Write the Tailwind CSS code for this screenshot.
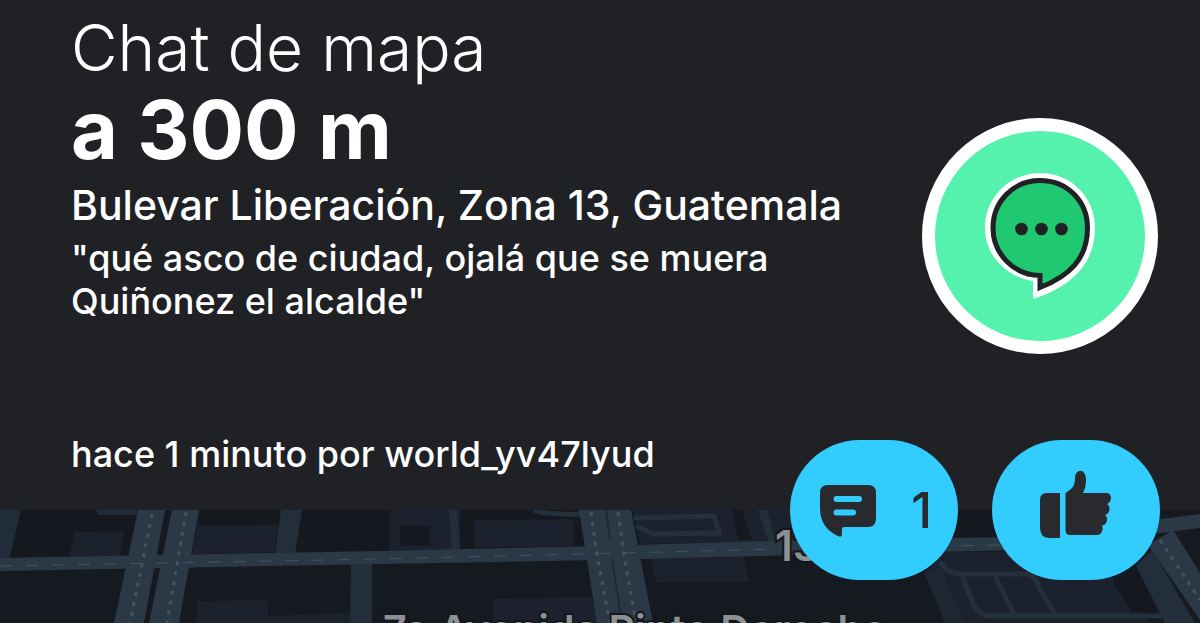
<!DOCTYPE html>
<html lang="es">
<head>
<meta charset="utf-8">
<meta name="viewport" content="width=device-width, initial-scale=1">
<title>Chat de mapa</title>
<script src="https://cdn.jsdelivr.net/npm/@tailwindcss/browser@4"></script>
</head>
<body class="bg-[#202125]">
<main class="flex min-h-screen flex-col bg-[#202125] font-['Inter','Liberation_Sans',sans-serif] text-white">
  <article class="relative z-10 flex items-start justify-between bg-[#202125] pt-2 pr-[42px] pb-[34px] pl-[71px]">
    <div class="min-w-0 flex-1">
      <h1 class="text-[64px] leading-[80px] font-light">Chat de mapa</h1>
      <p class="text-[81px] leading-[84px] font-bold">a 300 m</p>
      <p class="pt-[7px] text-[41px] leading-[52px] font-medium">Bulevar Liberación, Zona 13, Guatemala</p>
      <blockquote class="max-w-[760px] pt-[6px] text-[36px] leading-[43px] font-medium">"qué asco de ciudad, ojalá que se muera Quiñonez el alcalde"</blockquote>
      <p class="pt-[109px] text-[36px] leading-[44px] font-medium">hace 1 minuto por world_yv47lyud</p>
    </div>
    <div class="mt-[110px] size-[236px] shrink-0 rounded-full border-[13px] border-white bg-[#55f2ae]">
      <svg class="size-full" viewBox="935 131 210 210" role="img" aria-label="Chat">
        <path d="M1033 299V281C1006 277 985 255 985 228C985 197 1010 173 1040 173C1071 173 1095 197 1095 228C1095 264 1071 287 1033 299Z" fill="#fff"/>
        <path d="M1040 287.500V275.500C1013 275 993 253 993 228C993 201 1014 180.500 1040 180.500C1067 180.500 1087.500 201 1087.500 228C1087.500 259 1069 276 1040 287.500Z" fill="#1fc871" stroke="#202125" stroke-width="5"/>
        <g fill="#202125"><circle cx="1021.500" cy="229" r="6.300"/><circle cx="1041.500" cy="229" r="6.300"/><circle cx="1061.500" cy="229" r="6.300"/></g>
      </svg>
    </div>
    <div class="absolute right-10 -bottom-[70px] flex gap-[34px] text-[#292a2e]">
      <button type="button" aria-label="Comentarios: 1" class="flex h-[140px] w-[168px] items-center justify-between rounded-[70px] bg-[#33ccff] pr-[26px] pl-[29px]">
        <svg class="h-[56px] w-[58px]" viewBox="819 482 58 56" aria-hidden="true">
          <path d="M828 485H868Q876 485 876 493V518Q876 527 868 527H844Q842 527 842 529V534Q842 538 838 536Q820 528 820 508V493Q820 485 828 485Z" fill="currentColor"/>
          <path d="M836.500 499H859M836.500 512.500H853" stroke="#33ccff" stroke-width="6" stroke-linecap="round"/>
        </svg>
        <span class="text-[50px] leading-[60px] font-medium">1</span>
      </button>
      <button type="button" aria-label="Me gusta" class="flex h-[140px] w-[168px] items-center justify-center rounded-[70px] bg-[#33ccff]">
        <svg class="h-[72px] w-[74px]" viewBox="1039 474 74 72" fill="currentColor" overflow="visible" aria-hidden="true">
          <path d="M1047 493H1060V538H1050Q1040 538 1040 528V500Q1040 493 1047 493Z"/>
          <path d="M1065.500 493C1072 489 1075 486 1075 479C1075 468 1086 468 1086 480C1086 485 1085 489 1083 493H1106C1113 493 1112 502 1107 504C1111 506 1110 514 1105 515C1109 518 1107 525 1102 525.500C1104 530 1101 535 1097 535H1070Q1065.500 535 1065.500 530Z"/>
        </svg>
      </button>
    </div>
  </article>
  <section aria-label="Mapa" class="relative min-h-[113px] flex-1 overflow-hidden bg-[#151a21]">
    <svg class="absolute inset-0 size-full" viewBox="0 510 1200 113" preserveAspectRatio="xMidYMin slice" aria-hidden="true">
      <rect y="510" width="1200" height="113" fill="#151a20"/>
      <path d="M200 510H1100V536L200 556ZM20 510H138L128 556H10Z" fill="#15181f"/>
      <g fill="#1b222d">
        <path d="M75 532L124 531L120 556H69ZM198 526L278 525L274 552L192 554ZM198 601L268 600V616L350 613V623H195ZM390 510H460V550H390ZM474 520L573 519V546L474 547ZM493 599L592 597L600 623H493ZM633 510H800V540L640 544ZM651 559L744 557L749 582L656 583ZM925 572L945 552H1090L1150 623H945Z"/>
      </g>
      <path d="M400 526H430V546H400ZM468 512H512V519H468ZM733 510H742L752 540H738ZM960 510H980L1000 538H985ZM1113 582L1137 568L1162 612H1132Z" fill="#15181f"/>
      <path d="M925 574L940 566L965 623H945Z" fill="#1e2833"/>
      <path d="M0 510H21L9 560H0ZM96 510H137V515H98Z" fill="#202c3a"/>
      <g fill="none" stroke="#24313d" stroke-width="5">
        <path d="M534 510Q546 515 580 514M634 518L714 516L719 533L654 534L636 526M940 562Q948 575 964 574H1028Q1036 576 1040 590L1055 614M962 576L974 606Q980 616 992 616H1165M995 576L1014 614"/>
      </g>
      <path d="M281 510H302L295 554H275ZM351 564H372V623H350ZM449 510H457L460 550H452ZM758 510H767L776 543H769ZM1136 566L1152 550L1195 623H1165Z" fill="#222f3b"/>
      <g fill="#2b3946">
        <path d="M0 558L380 551L600 546L800 540L1020 537L1200 514V528L1020 550L800 555L600 560L380 564L0 571Z"/>
        <path d="M138 510H165L144 623H114ZM172 510H199L179 623H149ZM579 510H631L653 623H597Z"/>
        <path d="M1148 545L1173 530L1200 573V620Z"/>
      </g>
      <path d="M606 510L610 540M612 559L622 623" stroke="#202a34" stroke-width="2"/>
      <g fill="none" stroke="#455462" stroke-width="3" stroke-dasharray="4 6">
        <path d="M152 514L130 623M186 512L167 623M591 512L596 550L610 623M618 512L624 555L636 623M1160 540L1200 600"/>
        <path d="M0 566L380 559L780 549L1000 545" stroke-width="1" stroke-dasharray="12 14"/>
      </g>
      <g font-family="Inter, sans-serif" font-weight="600" fill="#8d9194" stroke="#13171c" stroke-width="4" paint-order="stroke">
        <text x="775" y="561" font-size="42">13</text>
        <text x="383" y="645" font-size="41">7a Avenida Pinto Derecho</text>
      </g>
    </svg>
  </section>
</main>
</body>
</html>
